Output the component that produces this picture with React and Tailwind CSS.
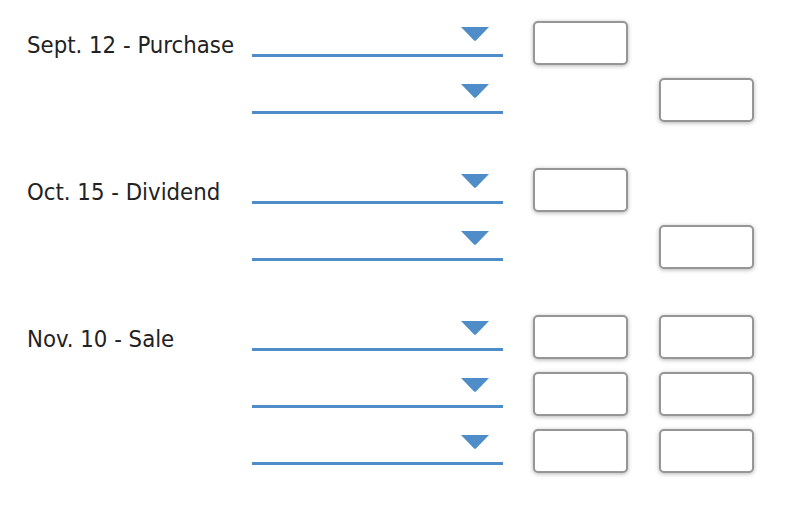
import React from 'react';

const groups = [
  {
    label: 'Sept. 12 - Purchase',
    rows: [
      [true, false],
      [false, true],
    ],
  },
  {
    label: 'Oct. 15 - Dividend',
    rows: [
      [true, false],
      [false, true],
    ],
  },
  {
    label: 'Nov. 10 - Sale',
    rows: [
      [true, true],
      [true, true],
      [true, true],
    ],
  },
];

const Caret = () => (
  <svg width="28" height="14" viewBox="0 0 28 14" className="absolute top-[6px] right-[14px]">
    <path d="M0 0 H28 L15.2 13.2 Q14 14.2 12.8 13.2 Z" fill="#4e8dc7" />
  </svg>
);

const Dropdown = () => (
  <div className="relative w-[251px] h-[36px] border-b-[3px] border-[#4e8dc7] shrink-0">
    <Caret />
  </div>
);

const AmountBox = ({ show }) =>
  show ? (
    <input
      type="text"
      className="w-[95px] h-[44px] shrink-0 rounded-[5px] border-2 border-[#969696] bg-white shadow-[0_1px_4px_rgba(0,0,0,0.3)] outline-none"
    />
  ) : (
    <div className="w-[95px] h-[44px] shrink-0" />
  );

export default function App() {
  return (
    <div
      className="w-[810px] h-[520px] bg-white pl-[27px] pt-[21px] flex flex-col gap-[33px] text-[#222]"
      style={{ fontFamily: '"DejaVu Sans Condensed", "DejaVu Sans", sans-serif' }}
    >
      {groups.map((g) => (
        <div key={g.label} className="flex">
          <div className="w-[225px] shrink-0 pt-[13px] text-[23.7px] leading-[23px]">{g.label}</div>
          <div className="flex flex-col">
            {g.rows.map((r, i) => (
              <div key={i} className="flex items-start h-[57px]">
                <Dropdown />
                <div className="ml-[30px] flex gap-[31px]">
                  <AmountBox show={r[0]} />
                  <AmountBox show={r[1]} />
                </div>
              </div>
            ))}
          </div>
        </div>
      ))}
    </div>
  );
}
